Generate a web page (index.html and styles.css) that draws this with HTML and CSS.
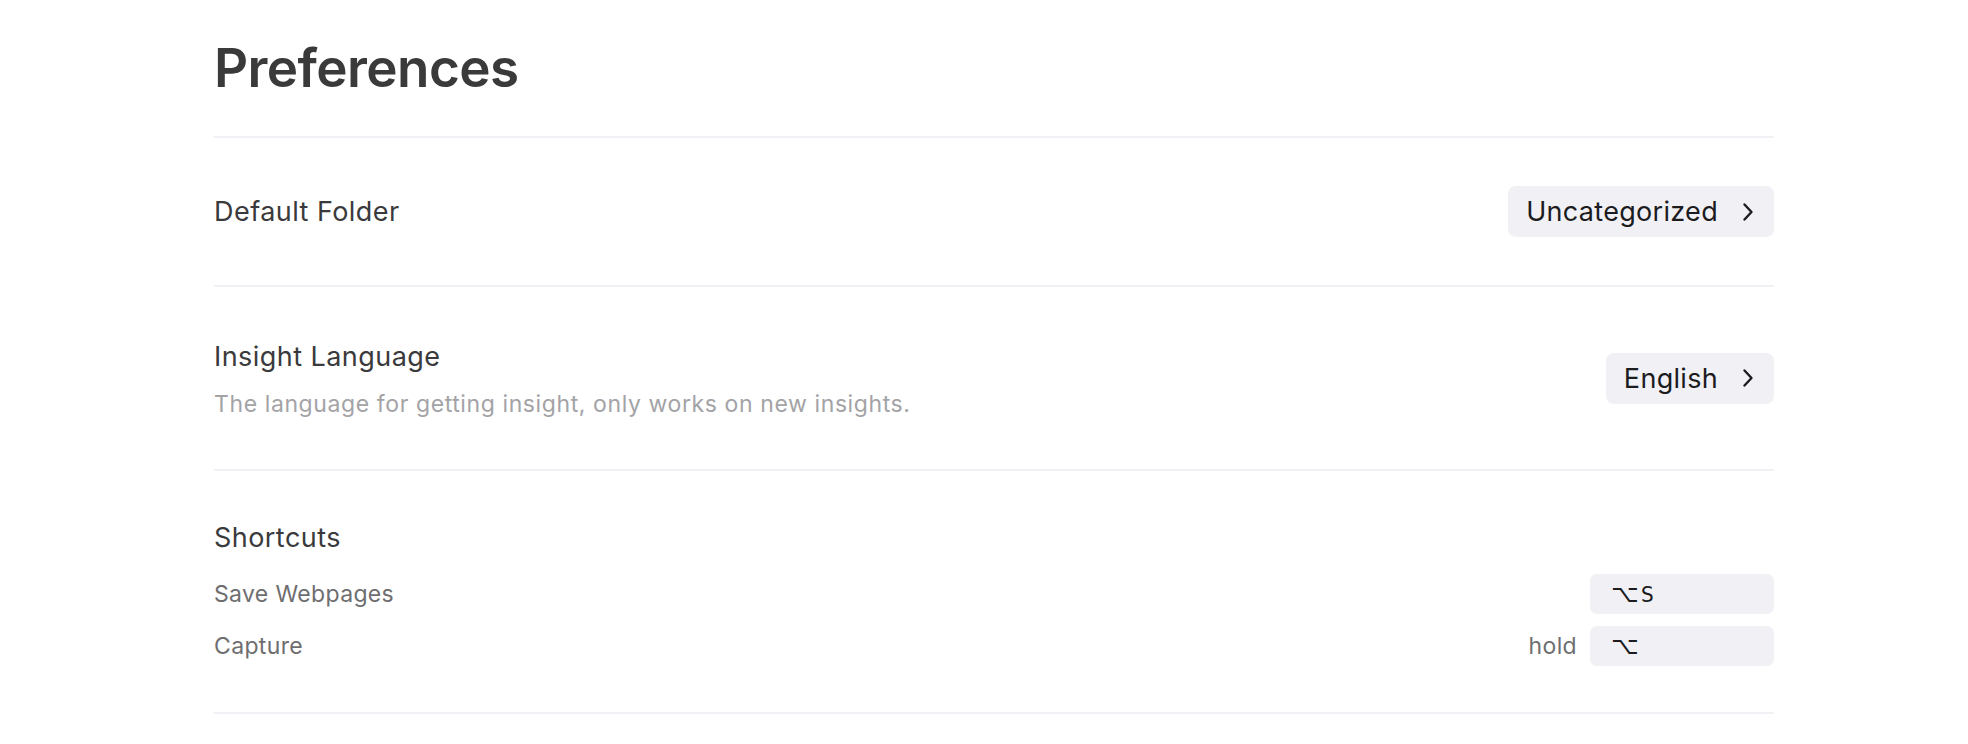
FILE: index.html
```html
<!DOCTYPE html>
<html lang="en">
<head>
    <meta charset="UTF-8">
    <meta name="viewport" content="width=device-width, initial-scale=1.0">
    <title>Preferences</title>
    <link rel="stylesheet" href="styles.css">
</head>
<body>
    <div class="page">
        <h1 class="page-title">Preferences</h1>

        <div class="pref-row">
            <div class="pref-label">Default Folder</div>
            <button class="pick-button">
                <span>Uncategorized</span>
                <svg class="chevron" viewBox="0 0 12 20" width="12" height="20">
                    <path d="M2.5 2.5 L9.5 10 L2.5 17.5" fill="none" stroke="currentColor" stroke-width="2.4" stroke-linecap="round" stroke-linejoin="round"/>
                </svg>
            </button>
        </div>

        <div class="pref-row pref-row-tall">
            <div class="pref-text">
                <div class="pref-label">Insight Language</div>
                <div class="pref-desc">The language for getting insight, only works on new insights.</div>
            </div>
            <button class="pick-button">
                <span>English</span>
                <svg class="chevron" viewBox="0 0 12 20" width="12" height="20">
                    <path d="M2.5 2.5 L9.5 10 L2.5 17.5" fill="none" stroke="currentColor" stroke-width="2.4" stroke-linecap="round" stroke-linejoin="round"/>
                </svg>
            </button>
        </div>

        <div class="pref-section">
            <div class="pref-label">Shortcuts</div>
            <div class="shortcut-list">
                <div class="shortcut">
                    <span class="shortcut-name">Save Webpages</span>
                    <div class="shortcut-value">
                        <span class="key-box"><span class="opt">⌥</span>S</span>
                    </div>
                </div>
                <div class="shortcut">
                    <span class="shortcut-name">Capture</span>
                    <div class="shortcut-value">
                        <span class="key-hint">hold</span>
                        <span class="key-box"><span class="opt">⌥</span></span>
                    </div>
                </div>
            </div>
        </div>
    </div>
</body>
</html>
```

FILE: styles.css
```css
/* Base */
body {
    margin: 0;
    background: #fff;
    font-family: Inter, "Noto Sans", sans-serif;
    color: #3a3a3c;
}

.page {
    width: 1560px;
    margin-left: 214px;
}

/* Title */
.page-title {
    margin: 0;
    padding: 36px 0;
    font-size: 53px;
    line-height: 64px;
    font-weight: 600;
    color: #3a3a3a;
    letter-spacing: -0.6px;
    border-bottom: 2px solid #f1f1f5;
}

/* Rows */
.pref-row {
    display: flex;
    align-items: center;
    justify-content: space-between;
    padding: 48px 0;
    border-bottom: 2px solid #f1f1f5;
}

.pref-row-tall {
    padding: 54px 0 51px;
}

.pref-label {
    font-size: 27px;
    line-height: 32px;
    letter-spacing: 0.45px;
    color: #3a3a3c;
}

.pref-desc {
    margin-top: 17px;
    font-size: 23px;
    line-height: 28px;
    letter-spacing: 0.6px;
    color: #a3a3a6;
}

/* Picker button */
.pick-button {
    display: flex;
    align-items: center;
    gap: 24px;
    height: 51px;
    margin-top: -3px;
    padding: 0 20px 0 18px;
    border: none;
    border-radius: 8px;
    background: #f1f1f5;
    font-family: inherit;
    font-size: 27px;
    letter-spacing: 0.3px;
    color: #1c1c1e;
    cursor: pointer;
}

.pref-row:first-of-type .pick-button,
.pref-row .pick-button:only-child {
    margin-top: 0;
}

.chevron {
    display: block;
}

/* Shortcuts */
.pref-section {
    padding: 51px 0 46px;
    border-bottom: 2px solid #f1f1f5;
}

.shortcut-list {
    margin-top: 20px;
    display: flex;
    flex-direction: column;
    gap: 12px;
}

.shortcut {
    display: flex;
    align-items: center;
    justify-content: space-between;
}

.shortcut-name {
    font-size: 23px;
    letter-spacing: 0.35px;
    color: #6e6e70;
}

.shortcut-value {
    display: flex;
    align-items: center;
    gap: 13px;
}

.key-hint {
    font-size: 23px;
    letter-spacing: 0.35px;
    color: #6e6e70;
}

.key-box {
    box-sizing: border-box;
    width: 184px;
    height: 40px;
    padding: 0 21px;
    border-radius: 7px;
    background: #f1f1f5;
    font-family: "DejaVu Sans Mono", monospace;
    font-size: 22px;
    line-height: 40px;
    color: #1c1c1e;
}

.key-box .opt {
    font-family: "DejaVu Sans", sans-serif;
    font-size: 24px;
    margin-right: 2px;
}
```
